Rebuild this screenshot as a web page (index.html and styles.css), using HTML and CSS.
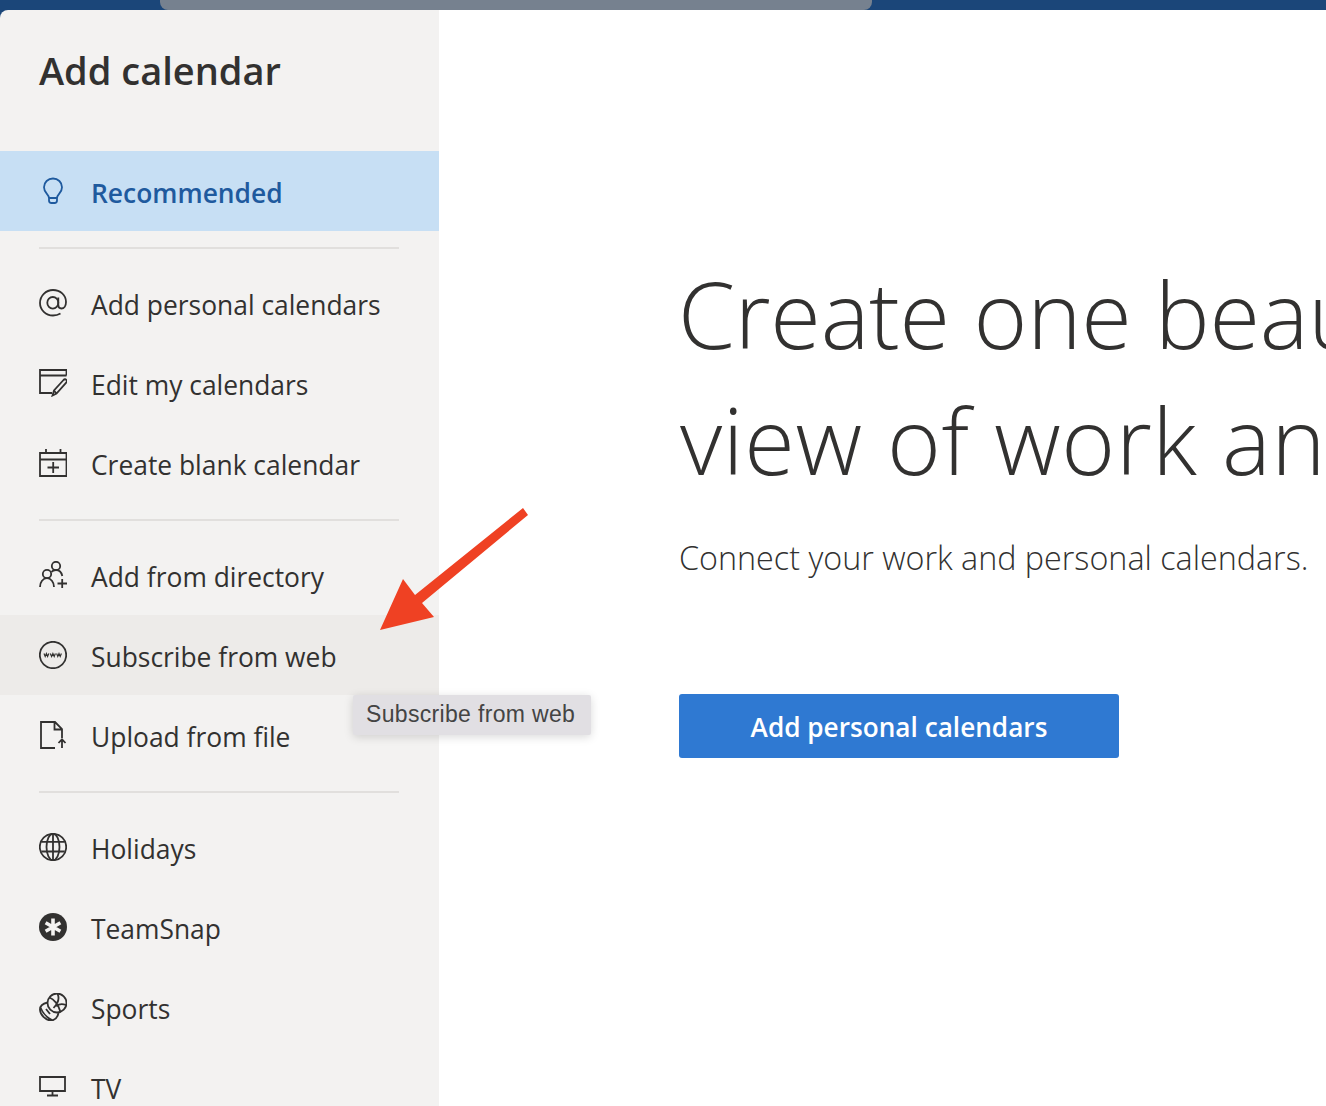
FILE: index.html
```html
<!DOCTYPE html>
<html lang="en">
<head>
    <meta charset="UTF-8">
    <meta name="viewport" content="width=device-width, initial-scale=1.0">
    <title>Add calendar</title>
    <link rel="stylesheet" href="styles.css">
</head>
<body>
    <div class="topbar"><div class="topbar-thumb"></div></div>

    <div class="dialog">
        <div class="sidebar">
            <h2 class="sidebar-title">Add calendar</h2>

            <div class="nav-item active">
                <svg class="icon" viewBox="0 0 28 28"><path d="M14 1.500c-5 0-9 3.800-9 8.700 0 2.800 1.200 4.800 2.900 6.700 1.200 1.400 2.100 2.600 2.100 4.100h8c0-1.500.9-2.700 2.100-4.100 1.700-1.900 2.900-3.900 2.900-6.700 0-4.900-4-8.700-9-8.700zM10 21v2.500c0 1.800 1 2.500 2.500 2.500h3c1.500 0 2.500-.7 2.500-2.500V21"/></svg>
                <span>Recommended</span>
            </div>

            <div class="divider"></div>

            <div class="nav-item">
                <svg class="icon" viewBox="0 0 28 28"><path d="M21.500 24.500c-2.200 1.300-4.700 2-7.500 2C6.800 26.500 1 21 1 14S6.800 1 14 1s13 4.800 13 12c0 3.800-1.900 6.500-4.600 6.500-2 0-3.100-1.300-3.100-3.400V8.500"/><ellipse cx="13.800" cy="13.800" rx="5.500" ry="5.800"/></svg>
                <span>Add personal calendars</span>
            </div>
            <div class="nav-item">
                <svg class="icon" viewBox="0 0 28 28"><path d="M13 24H1V1h26.500v5.500M1 6.500h26.500"/><path d="M13.500 26.500l1.500-5L24.500 11c1-1 2-1 2.800-.2s.8 1.800-.1 2.800L17.500 24.500zM15 21.500l2.500 3"/></svg>
                <span>Edit my calendars</span>
            </div>
            <div class="nav-item">
                <svg class="icon" viewBox="0 0 28 28"><path d="M1 4h26.500v23H1zM1 10.500h26.500M7 0v4M21.500 0v4M14.200 13v11M8.500 18.500h11.500"/></svg>
                <span>Create blank calendar</span>
            </div>

            <div class="divider"></div>

            <div class="nav-item">
                <svg class="icon" viewBox="0 0 28 28"><circle cx="17" cy="5" r="4.200"/><circle cx="8" cy="13" r="4.200"/><path d="M1 26c0-4.800 3-8.800 7-8.800 3.800 0 7 4 7 8.800M12.500 11c1-1.500 2.500-2 4.500-2 3.300 0 5.500 2.300 6.300 6M18.500 22.500h9.500M23.200 18v9"/></svg>
                <span>Add from directory</span>
            </div>
            <div class="nav-item hovered">
                <svg class="icon" viewBox="0 0 28 28"><circle cx="14" cy="14" r="13.200"/><path class="www" d="M5 12.500l1.200 3 1.200-3 1.200 3 1.200-3M11.300 12.500l1.300 3 1.300-3 1.300 3 1.200-3M17.600 12.500l1.200 3 1.200-3 1.200 3 1.200-3"/></svg>
                <span>Subscribe from web</span>
            </div>
            <div class="nav-item">
                <svg class="icon" viewBox="0 0 28 28"><path d="M16 27H2V1h14l7 7v9M15.500 1v7.500H23M23 27v-8.500M19.500 22l3.500-3.700 3.500 3.700"/></svg>
                <span>Upload from file</span>
            </div>

            <div class="divider"></div>

            <div class="nav-item">
                <svg class="icon" viewBox="0 0 28 28"><circle cx="14" cy="14" r="13.200"/><ellipse cx="14" cy="14" rx="6.500" ry="13.200"/><path d="M14 .8v26.400M2.300 8.800h23.400M2.300 18.500h23.400"/></svg>
                <span>Holidays</span>
            </div>
            <div class="nav-item">
                <svg class="icon" viewBox="0 0 28 28"><circle class="solid" cx="14" cy="14" r="14"/><path class="star" d="M14 5.500v17M6.600 9.800l14.800 8.400M21.400 9.800L6.600 18.200"/></svg>
                <span>TeamSnap</span>
            </div>
            <div class="nav-item">
                <svg class="icon" viewBox="0 0 28 28"><circle cx="18" cy="10" r="9.500"/><path d="M10.500 4.500c4 1.500 9 6.500 11 14.500M18.500.8c2 4 1 9-4 14.200M27 12c-4-1.500-7-1-10 1M8.500 9.500C4 10.500.8 13 1 17c.3 5 6 10.500 11 10.500 4-.2 6.500-3 7.500-7.500M7 16l4 5M1.500 14.500c2 5 6 10 11.500 12.500"/></svg>
                <span>Sports</span>
            </div>
            <div class="nav-item">
                <svg class="icon" viewBox="0 0 28 28"><path d="M1 4h25v14H1zM13.500 18v4M8 22.500h11"/></svg>
                <span>TV</span>
            </div>
        </div>

        <div class="main">
            <h1 class="headline">Create one beautiful<br><span class="headline-wide">view of work and life</span></h1>
            <p class="subline">Connect your work and personal calendars.</p>
            <button class="primary-btn">Add personal calendars</button>
        </div>
    </div>

    <div class="tooltip">Subscribe from web</div>

    <svg class="arrow" viewBox="0 0 160 130"><polygon points="143,0 148,7 42,95 54,109 0,122 23,71 35,87"/></svg>
</body>
</html>
```

FILE: styles.css
```css
* { box-sizing: border-box; }
html, body { height: 100%; }
body {
    margin: 0;
    height: 1106px;
    overflow: hidden;
    position: relative;
    background: #1b4679;
    font-family: "Open Sans", "Noto Sans", sans-serif;
    color: #323130;
    display: flex;
    flex-direction: column;
}
.topbar {
    height: 10px;
    flex-shrink: 0;
    padding-left: 160px;
}
.topbar-thumb {
    width: 712px;
    height: 10px;
    background: #76818f;
    border-radius: 0 0 8px 8px;
}
.dialog {
    flex: 1;
    display: flex;
    min-height: 0;
}
.sidebar {
    width: 439px;
    flex-shrink: 0;
    background: #f3f2f1;
    border-radius: 8px 0 0 0;
    overflow: hidden;
}
.sidebar-title {
    margin: 0;
    height: 141px;
    padding: 29px 0 0 39px;
    font-size: 38px;
    line-height: 62px;
    font-weight: 600;
}
.nav-item {
    height: 80px;
    flex-shrink: 0;
    display: flex;
    align-items: center;
    gap: 24px;
    padding: 0 0 0 39px;
    font-size: 26.4px;
}
.nav-item span {
    position: relative;
    top: 2px;
}
.nav-item.active {
    background: #c7dff4;
    color: #1f5a9e;
    font-weight: 600;
}
.nav-item.hovered { background: #edebe9; }
.icon {
    width: 28px;
    height: 28px;
    flex-shrink: 0;
    fill: none;
    stroke: #323130;
    stroke-width: 1.8;
}
.nav-item.active .icon { stroke: #1f5a9e; }
.icon .www { stroke-width: 1.2; }
.icon .solid { fill: #323130; stroke: none; }
.icon .star { stroke: #f3f2f1; stroke-width: 3.6; }
.divider {
    height: 2px;
    margin: 16px 40px 14px 39px;
    background: #e1dfdd;
}
.main {
    flex: 1;
    min-width: 0;
    background: #fff;
    padding: 241px 0 0 239px;
    overflow: hidden;
    white-space: nowrap;
}
.headline {
    margin: 0;
    font-size: 92px;
    line-height: 126px;
    font-weight: 300;
    letter-spacing: -0.27px;
}
.headline-wide {
    margin-left: 2px;
    letter-spacing: 0.6px;
}
.subline {
    margin: 32px 0 0 1px;
    font-size: 32.3px;
    line-height: 44px;
    font-weight: 300;
}
.primary-btn {
    display: block;
    width: 440px;
    height: 64px;
    margin: 115px 0 0 1px;
    padding: 2px 0 0;
    border: none;
    border-radius: 3px;
    background: #2f79d2;
    color: #fff;
    font-family: inherit;
    font-size: 26.2px;
    font-weight: 600;
}
.tooltip {
    position: absolute;
    left: 353px;
    top: 695px;
    width: 238px;
    height: 40px;
    background: #e1dfe3;
    border-radius: 2px;
    box-shadow: 0 2px 10px rgba(0, 0, 0, 0.15);
    font-family: "Liberation Sans", sans-serif;
    font-size: 23px;
    letter-spacing: 0.33px;
    line-height: 38px;
    padding-left: 13px;
    color: #444;
    white-space: nowrap;
}
.arrow {
    position: absolute;
    left: 380px;
    top: 508px;
    width: 160px;
    height: 130px;
    fill: #ef4123;
}
```
